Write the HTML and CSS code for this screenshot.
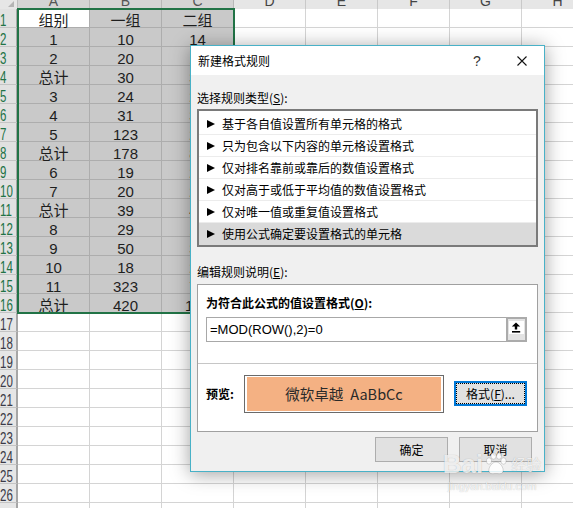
FILE: index.html
```html
<!DOCTYPE html>
<html lang="zh">
<head>
<meta charset="utf-8">
<title>新建格式规则</title>
<link rel="stylesheet" href="styles.css">
</head>
<body>
<div class="sheet">
  <div class="hdr">
    <div class="corner"><svg class="tri" viewBox="0 0 6 6" width="6" height="6"><polygon points="6,0 6,6 0,6" fill="#b4b4b4"/></svg></div>
    <div class="ch s">A</div><div class="ch s">B</div><div class="ch s">C</div><div class="ch">D</div><div class="ch">E</div><div class="ch">F</div><div class="ch">G</div><div class="ch">H</div>
  </div>
  <div class="row"><div class="rh s"><span>1</span></div><div class="c s a">组别</div><div class="c s">一组</div><div class="c s">二组</div><div class="c"></div><div class="c"></div><div class="c"></div><div class="c"></div><div class="c"></div></div>
  <div class="row"><div class="rh s"><span>2</span></div><div class="c s">1</div><div class="c s">10</div><div class="c s">14</div><div class="c"></div><div class="c"></div><div class="c"></div><div class="c"></div><div class="c"></div></div>
  <div class="row"><div class="rh s"><span>3</span></div><div class="c s">2</div><div class="c s">20</div><div class="c s">16</div><div class="c"></div><div class="c"></div><div class="c"></div><div class="c"></div><div class="c"></div></div>
  <div class="row"><div class="rh s"><span>4</span></div><div class="c s">总计</div><div class="c s">30</div><div class="c s">30</div><div class="c"></div><div class="c"></div><div class="c"></div><div class="c"></div><div class="c"></div></div>
  <div class="row"><div class="rh s"><span>5</span></div><div class="c s">3</div><div class="c s">24</div><div class="c s">25</div><div class="c"></div><div class="c"></div><div class="c"></div><div class="c"></div><div class="c"></div></div>
  <div class="row"><div class="rh s"><span>6</span></div><div class="c s">4</div><div class="c s">31</div><div class="c s">33</div><div class="c"></div><div class="c"></div><div class="c"></div><div class="c"></div><div class="c"></div></div>
  <div class="row"><div class="rh s"><span>7</span></div><div class="c s">5</div><div class="c s">123</div><div class="c s">28</div><div class="c"></div><div class="c"></div><div class="c"></div><div class="c"></div><div class="c"></div></div>
  <div class="row"><div class="rh s"><span>8</span></div><div class="c s">总计</div><div class="c s">178</div><div class="c s">86</div><div class="c"></div><div class="c"></div><div class="c"></div><div class="c"></div><div class="c"></div></div>
  <div class="row"><div class="rh s"><span>9</span></div><div class="c s">6</div><div class="c s">19</div><div class="c s">21</div><div class="c"></div><div class="c"></div><div class="c"></div><div class="c"></div><div class="c"></div></div>
  <div class="row"><div class="rh s"><span>10</span></div><div class="c s">7</div><div class="c s">20</div><div class="c s">22</div><div class="c"></div><div class="c"></div><div class="c"></div><div class="c"></div><div class="c"></div></div>
  <div class="row"><div class="rh s"><span>11</span></div><div class="c s">总计</div><div class="c s">39</div><div class="c s">43</div><div class="c"></div><div class="c"></div><div class="c"></div><div class="c"></div><div class="c"></div></div>
  <div class="row"><div class="rh s"><span>12</span></div><div class="c s">8</div><div class="c s">29</div><div class="c s">19</div><div class="c"></div><div class="c"></div><div class="c"></div><div class="c"></div><div class="c"></div></div>
  <div class="row"><div class="rh s"><span>13</span></div><div class="c s">9</div><div class="c s">50</div><div class="c s">38</div><div class="c"></div><div class="c"></div><div class="c"></div><div class="c"></div><div class="c"></div></div>
  <div class="row"><div class="rh s"><span>14</span></div><div class="c s">10</div><div class="c s">18</div><div class="c s">20</div><div class="c"></div><div class="c"></div><div class="c"></div><div class="c"></div><div class="c"></div></div>
  <div class="row"><div class="rh s"><span>15</span></div><div class="c s">11</div><div class="c s">323</div><div class="c s">71</div><div class="c"></div><div class="c"></div><div class="c"></div><div class="c"></div><div class="c"></div></div>
  <div class="row"><div class="rh s"><span>16</span></div><div class="c s">总计</div><div class="c s">420</div><div class="c s">148</div><div class="c"></div><div class="c"></div><div class="c"></div><div class="c"></div><div class="c"></div></div>
  <div class="row"><div class="rh"><span>17</span></div><div class="c"></div><div class="c"></div><div class="c"></div><div class="c"></div><div class="c"></div><div class="c"></div><div class="c"></div><div class="c"></div></div>
  <div class="row"><div class="rh"><span>18</span></div><div class="c"></div><div class="c"></div><div class="c"></div><div class="c"></div><div class="c"></div><div class="c"></div><div class="c"></div><div class="c"></div></div>
  <div class="row"><div class="rh"><span>19</span></div><div class="c"></div><div class="c"></div><div class="c"></div><div class="c"></div><div class="c"></div><div class="c"></div><div class="c"></div><div class="c"></div></div>
  <div class="row"><div class="rh"><span>20</span></div><div class="c"></div><div class="c"></div><div class="c"></div><div class="c"></div><div class="c"></div><div class="c"></div><div class="c"></div><div class="c"></div></div>
  <div class="row"><div class="rh"><span>21</span></div><div class="c"></div><div class="c"></div><div class="c"></div><div class="c"></div><div class="c"></div><div class="c"></div><div class="c"></div><div class="c"></div></div>
  <div class="row"><div class="rh"><span>22</span></div><div class="c"></div><div class="c"></div><div class="c"></div><div class="c"></div><div class="c"></div><div class="c"></div><div class="c"></div><div class="c"></div></div>
  <div class="row"><div class="rh"><span>23</span></div><div class="c"></div><div class="c"></div><div class="c"></div><div class="c"></div><div class="c"></div><div class="c"></div><div class="c"></div><div class="c"></div></div>
  <div class="row"><div class="rh"><span>24</span></div><div class="c"></div><div class="c"></div><div class="c"></div><div class="c"></div><div class="c"></div><div class="c"></div><div class="c"></div><div class="c"></div></div>
  <div class="row"><div class="rh"><span>25</span></div><div class="c"></div><div class="c"></div><div class="c"></div><div class="c"></div><div class="c"></div><div class="c"></div><div class="c"></div><div class="c"></div></div>
  <div class="row"><div class="rh"><span>26</span></div><div class="c"></div><div class="c"></div><div class="c"></div><div class="c"></div><div class="c"></div><div class="c"></div><div class="c"></div><div class="c"></div></div>
  <div class="row"><div class="rh"><span>27</span></div><div class="c"></div><div class="c"></div><div class="c"></div><div class="c"></div><div class="c"></div><div class="c"></div><div class="c"></div><div class="c"></div></div>
</div>
<div class="selbox"></div>

<div class="dlg">
  <div class="tbar">
    <div class="ttl">新建格式规则</div>
    <div class="help">?</div>
    <div class="close"><svg viewBox="0 0 10 10" width="10" height="10"><path d="M0.5 0.5 L9.5 9.5 M9.5 0.5 L0.5 9.5" stroke="#111" stroke-width="1.1" fill="none"/></svg></div>
  </div>
  <div class="body">
    <div class="lbl">选择规则类型(<u>S</u>):</div>
    <div class="list">
      <div class="item"><svg viewBox="0 0 8 8" width="8" height="8"><polygon points="0,0 8,4 0,8" fill="#000"/></svg><span>基于各自值设置所有单元格的格式</span></div>
      <div class="item"><svg viewBox="0 0 8 8" width="8" height="8"><polygon points="0,0 8,4 0,8" fill="#000"/></svg><span>只为包含以下内容的单元格设置格式</span></div>
      <div class="item"><svg viewBox="0 0 8 8" width="8" height="8"><polygon points="0,0 8,4 0,8" fill="#000"/></svg><span>仅对排名靠前或靠后的数值设置格式</span></div>
      <div class="item"><svg viewBox="0 0 8 8" width="8" height="8"><polygon points="0,0 8,4 0,8" fill="#000"/></svg><span>仅对高于或低于平均值的数值设置格式</span></div>
      <div class="item"><svg viewBox="0 0 8 8" width="8" height="8"><polygon points="0,0 8,4 0,8" fill="#000"/></svg><span>仅对唯一值或重复值设置格式</span></div>
      <div class="item sel"><svg viewBox="0 0 8 8" width="8" height="8"><polygon points="0,0 8,4 0,8" fill="#000"/></svg><span>使用公式确定要设置格式的单元格</span></div>
    </div>
    <div class="lbl lbl2">编辑规则说明(<u>E</u>):</div>
    <div class="group">
      <div class="gtop">
        <div class="blbl">为符合此公式的值设置格式(<u>O</u>):</div>
        <div class="formula">
          <div class="ftext">=MOD(ROW(),2)=0</div>
          <div class="collapse"><div class="cbox"><svg viewBox="0 0 15 13" width="15" height="13"><polygon points="7,1.5 2.8,5.6 5.8,5.6 5.8,8.6 8.2,8.6 8.2,5.6 11.2,5.6" fill="#000"/><rect x="3" y="10" width="8.2" height="1.6" fill="#000"/></svg></div></div>
        </div>
      </div>
      <div class="gbot">
        <div class="plbl">预览:</div>
        <div class="preview"><div class="swatch">微软卓越<span class="lat">AaBbCc</span></div></div>
        <div class="fbtn"><div class="focus">格式(<u>F</u>)...</div></div>
      </div>
    </div>
    <div class="btns">
      <div class="btn">确定</div>
      <div class="btn">取消</div>
    </div>
  </div>
</div>

<div class="wm">
  <div class="wm-big"><span>Bai</span><svg class="paw" viewBox="0 0 24 24" width="24" height="24"><g fill="rgba(255,255,255,0.85)" stroke="rgba(0,0,0,0.18)" stroke-width="0.8"><ellipse cx="5" cy="9" rx="2.6" ry="3.2"/><ellipse cx="9.5" cy="4" rx="2.6" ry="3.2"/><ellipse cx="15" cy="4" rx="2.6" ry="3.2"/><ellipse cx="19.5" cy="9" rx="2.6" ry="3.2"/><path d="M12 10 C8 10 4 16 5 19.5 C6 22.5 9 21.5 12 21.5 C15 21.5 18 22.5 19 19.5 C20 16 16 10 12 10 Z"/></g></svg><span class="wm-cn">经验</span></div>
  <div class="wm-small">jingyan.baidu.com</div>
</div>
</body>
</html>
```

FILE: styles.css
```css
html, body {
  margin: 0;
  padding: 0;
}
body {
  width: 573px;
  height: 508px;
  overflow: hidden;
  position: relative;
  background: #ffffff;
  font-family: "Liberation Sans", "Noto Sans CJK SC", sans-serif;
}

/* ---------- sheet ---------- */
.sheet {
  width: 594px;
}
.hdr {
  display: flex;
  height: 9px;
  overflow: hidden;
}
.corner {
  width: 18px;
  flex: none;
  box-sizing: border-box;
  background: #e6e6e6;
  border-right: 1px solid #bdbdbd;
  display: flex;
  justify-content: flex-end;
  align-items: flex-start;
  padding: 1px 3px 0 0;
}
.tri {
  display: block;
}
.ch {
  width: 72px;
  flex: none;
  box-sizing: border-box;
  background: #e6e6e6;
  border-right: 1px solid #c9c9c9;
  color: #444444;
  font-size: 14px;
  line-height: 14px;
  display: flex;
  align-items: flex-end;
  justify-content: center;
  padding-bottom: 1px;
}
.ch.s {
  background: #d4d4d4;
  color: #555555;
  border-right-color: #b8b8b8;
}
.row {
  display: flex;
  height: 19px;
}
.rh {
  width: 18px;
  flex: none;
  box-sizing: border-box;
  background: #e6e6e6;
  border-right: 2px solid #a6a6a6;
  border-bottom: 1px solid #c4c4c4;
  color: #3a3a48;
  overflow: hidden;
  padding-top: 3px;
}
.rh span {
  display: inline-block;
  font-size: 16px;
  line-height: 16px;
  transform: scaleX(0.72);
  transform-origin: 0 0;
}
.rh.s {
  background: #e1e1e1;
  color: #217346;
}
.c {
  width: 72px;
  flex: none;
  box-sizing: border-box;
  border-right: 1px solid #d4d4d4;
  border-bottom: 1px solid #d4d4d4;
  font-size: 15px;
  line-height: 14px;
  padding-top: 5px;
  text-align: center;
  color: #1e1e1e;
  white-space: nowrap;
}
.c.s {
  background: #c9c9c9;
  border-color: #adadad;
}
.c.a {
  background: #ffffff;
}
.selbox {
  position: absolute;
  left: 17px;
  top: 8px;
  width: 218px;
  height: 306px;
  box-sizing: border-box;
  border: 2px solid #217346;
}

/* ---------- dialog ---------- */
.dlg {
  position: absolute;
  left: 190px;
  top: 45px;
  width: 355px;
  height: 427px;
  box-sizing: border-box;
  border: 1px solid #48b1c7;
  background: #f0f0f0;
  box-shadow: 0 2px 18px rgba(0, 0, 0, 0.38);
  display: flex;
  flex-direction: column;
  font-family: "Noto Sans CJK SC", "Liberation Sans", sans-serif;
  font-size: 12px;
  color: #000000;
}
.tbar {
  height: 29px;
  flex: none;
  background: #ffffff;
  display: flex;
  align-items: center;
  padding-left: 7px;
}
.ttl {
  flex: 1;
  line-height: 16px;
}
.help {
  width: 46px;
  text-align: center;
  font-family: "Liberation Sans", sans-serif;
  font-size: 14px;
  color: #333333;
  line-height: 16px;
}
.close {
  width: 44px;
  display: flex;
  justify-content: center;
  align-items: center;
}
.close svg {
  display: block;
}
.body {
  flex: 1;
  display: flex;
  flex-direction: column;
  padding: 15px 6px 0 6px;
}
.lbl {
  line-height: 16px;
  height: 16px;
}
.lbl2 {
  margin-top: 17px;
}
.list {
  margin-top: 3px;
  height: 138px;
  box-sizing: border-box;
  border: 2px solid #7a7a7a;
  background: #ffffff;
  padding-top: 2px;
}
.item {
  height: 22px;
  box-sizing: border-box;
  border-bottom: 1px solid #ececec;
  display: flex;
  align-items: center;
  padding-left: 8px;
  line-height: 16px;
  white-space: nowrap;
  overflow: hidden;
}
.item:last-child {
  border-bottom: none;
}
.item svg {
  flex: none;
  margin-right: 7px;
}
.item.sel {
  background: #dadada;
}
.group {
  margin-top: 4px;
  height: 148px;
  box-sizing: border-box;
  border: 1px solid #a0a0a0;
  background: #ffffff;
  display: flex;
  flex-direction: column;
}
.gtop {
  height: 79px;
  box-sizing: border-box;
  border-bottom: 1px solid #c6c6c6;
  padding: 10px 10px 0 8px;
}
.blbl {
  font-weight: bold;
  line-height: 16px;
}
.formula {
  margin-top: 6px;
  height: 25px;
  display: flex;
}
.ftext {
  flex: 1;
  box-sizing: border-box;
  border: 1px solid #a8a8a8;
  border-right: none;
  font-family: "Liberation Sans", sans-serif;
  font-size: 13px;
  line-height: 23px;
  padding-left: 3px;
  color: #000;
}
.collapse {
  width: 21px;
  flex: none;
  box-sizing: border-box;
  border: 2px solid #ababab;
  background: #e3e3e3;
  display: flex;
  justify-content: center;
  padding-top: 2px;
}
.cbox {
  width: 15px;
  height: 13px;
  background: #ffffff;
}
.cbox svg {
  display: block;
}
.gbot {
  flex: 1;
  display: flex;
  align-items: center;
  padding: 0 0 8px 8px;
}
.plbl {
  width: 38px;
  flex: none;
  font-weight: bold;
  line-height: 16px;
}
.preview {
  width: 200px;
  height: 38px;
  box-sizing: border-box;
  border: 1px solid #6a6a6a;
  padding: 1px 2px;
  background: #ffffff;
  display: flex;
}
.swatch {
  flex: 1;
  background: #f4b183;
  display: flex;
  align-items: center;
  justify-content: center;
  font-size: 14.5px;
  color: #2a2a2a;
}
.lat {
  margin-left: 7px;
}
.fbtn {
  margin-left: 10px;
  width: 73px;
  height: 25px;
  box-sizing: border-box;
  border: 2px solid #0078d7;
  background: #e1e1e1;
  display: flex;
}
.focus {
  flex: 1;
  border: 1px dotted #000000;
  display: flex;
  align-items: center;
  justify-content: center;
  line-height: 16px;
}
.btns {
  margin-top: 5px;
  display: flex;
  justify-content: flex-end;
  gap: 11px;
  padding-right: 6px;
}
.btn {
  width: 73px;
  height: 25px;
  box-sizing: border-box;
  border: 1px solid #adadad;
  background: #e1e1e1;
  display: flex;
  align-items: center;
  justify-content: center;
  line-height: 16px;
}

/* ---------- watermark ---------- */
.wm {
  position: absolute;
  left: 440px;
  top: 450px;
  width: 104px;
  display: flex;
  flex-direction: column;
  align-items: center;
  pointer-events: none;
}
.wm-big {
  display: flex;
  align-items: center;
  font-family: "Liberation Sans", sans-serif;
  font-weight: bold;
  font-size: 26px;
  line-height: 28px;
  color: rgba(255, 255, 255, 0.8);
  text-shadow: 0 0 1px rgba(0, 0, 0, 0.28);
}
.paw {
  margin: 0 1px;
}
.wm-cn {
  font-family: "Noto Sans CJK SC", sans-serif;
  font-weight: normal;
  font-size: 15px;
  margin-left: 2px;
}
.wm-small {
  font-family: "Liberation Sans", sans-serif;
  font-size: 11px;
  line-height: 12px;
  margin-top: 2px;
  color: rgba(255, 255, 255, 0.85);
  text-shadow: 0 0 1px rgba(0, 0, 0, 0.28);
}
```
